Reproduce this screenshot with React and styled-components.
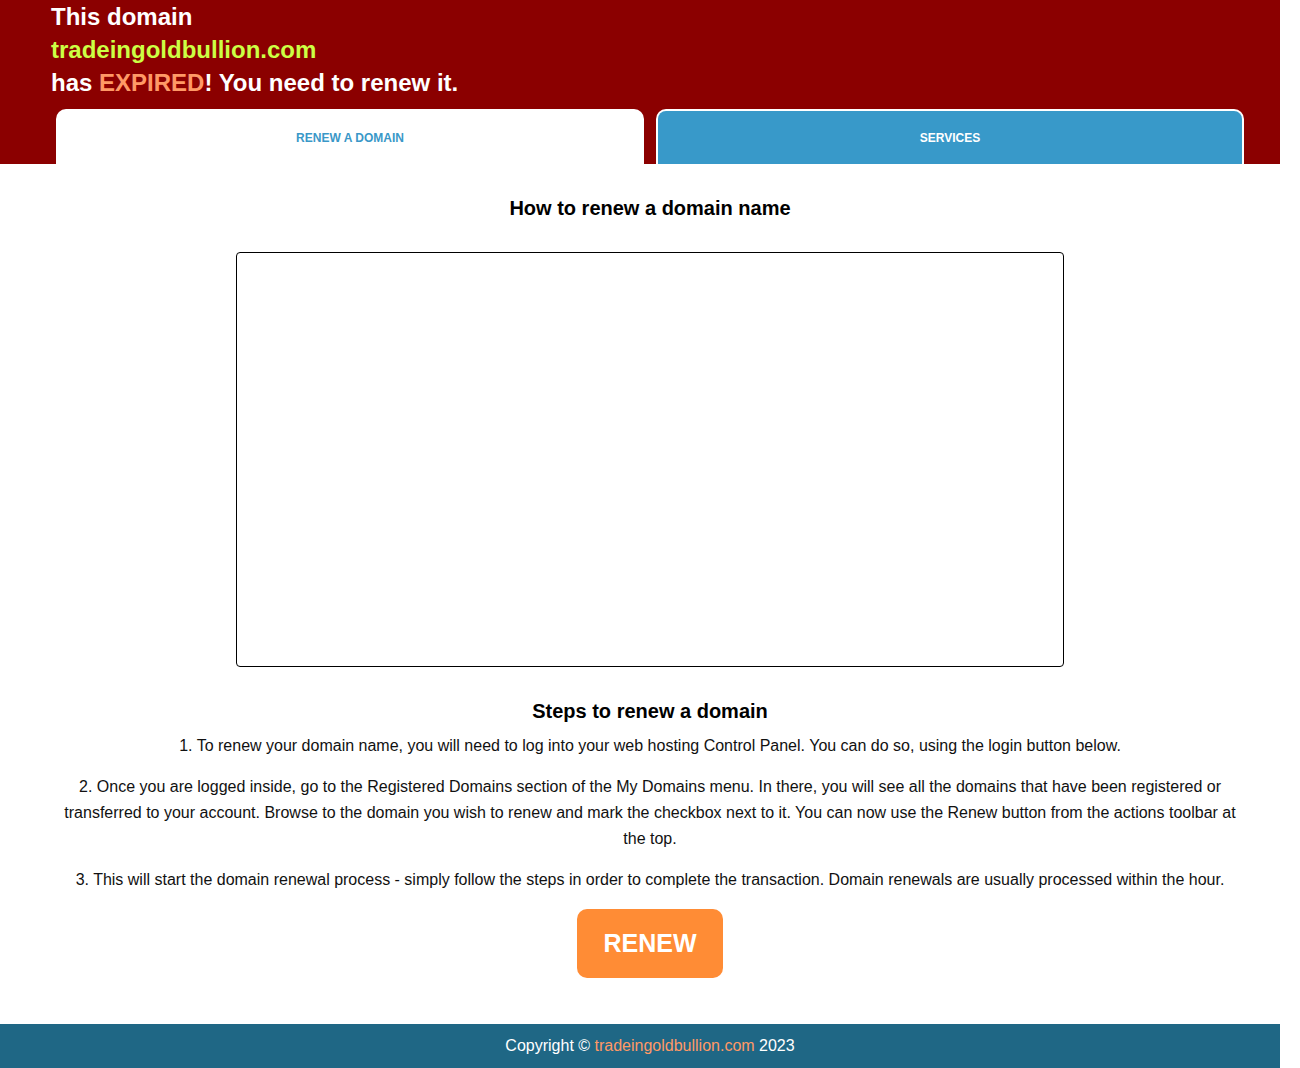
import React from "react";
import styled, { createGlobalStyle } from "styled-components";

const Global = createGlobalStyle`
  html, body { margin: 0; padding: 0; background: #fff; }
  body { font-family: "Liberation Sans", Arial, sans-serif; }
`;

const Page = styled.div`
  width: 1300px;
  display: flex;
  flex-direction: column;
`;

const Header = styled.header`
  width: 1280px;
  box-sizing: border-box;
  background: #8b0000;
  padding: 0 0 0 50px;
  display: flex;
  flex-direction: column;
`;

const Title = styled.h1`
  margin: 0;
  font-size: 24px;
  line-height: 33px;
  font-weight: bold;
  color: #fff;
  padding-left: 1px;
`;

const Domain = styled.span`
  color: ${(p) => p.$color};
`;

const Tabs = styled.nav`
  display: flex;
  gap: 12px;
  margin-top: 10px;
  padding-left: 6px;
`;

const Tab = styled.div`
  width: 588px;
  height: 55px;
  box-sizing: border-box;
  border: 2px solid #fff;
  border-bottom: none;
  border-radius: 10px 10px 0 0;
  background: ${(p) => (p.$active ? "#fff" : "#3899c9")};
  color: ${(p) => (p.$active ? "#3a98c8" : "#fff")};
  font-size: 12px;
  font-weight: bold;
  display: flex;
  align-items: center;
  justify-content: center;
`;

const Main = styled.main`
  padding: 32px 60px 0;
  display: flex;
  flex-direction: column;
  align-items: center;
  text-align: center;
`;

const Heading = styled.h2`
  margin: 0;
  font-size: 20px;
  line-height: 24px;
  font-weight: bold;
  color: #000;
`;

const VideoBox = styled.div`
  width: 828px;
  height: 415px;
  box-sizing: border-box;
  border: 1px solid #000;
  border-radius: 4px;
  margin: 32px 0;
`;

const Steps = styled.div`
  margin-top: 10px;
  display: flex;
  flex-direction: column;
  gap: 15px;
`;

const Para = styled.p`
  margin: 0;
  font-size: 16px;
  line-height: 26px;
  color: #111;
`;

const RenewButton = styled.button`
  margin-top: 16px;
  width: 146px;
  height: 69px;
  border: none;
  border-radius: 10px;
  background: #ff8c35;
  color: #fff;
  font-family: "Liberation Sans", Arial, sans-serif;
  font-size: 25px;
  font-weight: bold;
  cursor: pointer;
`;

const Footer = styled.footer`
  width: 1280px;
  box-sizing: border-box;
  padding-left: 20px;
  margin-top: 46px;
  height: 44px;
  background: #1f6785;
  color: #fff;
  font-size: 16px;
  display: flex;
  align-items: center;
  justify-content: center;
`;

export default function App() {
  return (
    <Page>
      <Global />
      <Header>
        <Title>This domain</Title>
        <Title>
          <Domain $color="#ccff44">tradeingoldbullion.com</Domain>
        </Title>
        <Title>
          has <Domain $color="#ff9966">EXPIRED</Domain>! You need to renew it.
        </Title>
        <Tabs>
          <Tab $active>RENEW A DOMAIN</Tab>
          <Tab>SERVICES</Tab>
        </Tabs>
      </Header>
      <Main>
        <Heading>How to renew a domain name</Heading>
        <VideoBox />
        <Heading>Steps to renew a domain</Heading>
        <Steps>
          <Para>
            1. To renew your domain name, you will need to log into your web hosting Control Panel. You can do so, using the login button below.
          </Para>
          <Para>
            2. Once you are logged inside, go to the Registered Domains section of the My Domains menu. In there, you will see all the domains that have been registered or transferred to your account. Browse to the domain you wish to renew and mark the checkbox next to it. You can now use the Renew button from the actions toolbar at the top.
          </Para>
          <Para>
            3. This will start the domain renewal process - simply follow the steps in order to complete the transaction. Domain renewals are usually processed within the hour.
          </Para>
        </Steps>
        <RenewButton>RENEW</RenewButton>
      </Main>
      <Footer>
        Copyright ©&nbsp;<Domain $color="#ff9966">tradeingoldbullion.com</Domain>&nbsp;2023
      </Footer>
    </Page>
  );
}
